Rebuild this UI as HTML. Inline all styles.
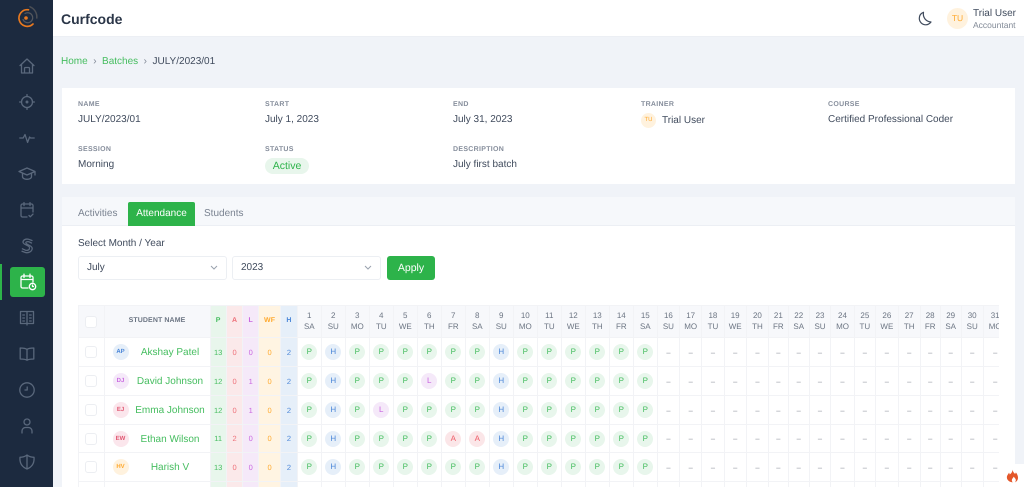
<!DOCTYPE html>
<html lang="en"><head><meta charset="utf-8"><title>Curfcode</title>
<style>
*{box-sizing:border-box}
html,body{margin:0;padding:0;width:1024px;height:487px;overflow:hidden;background:#f0f3f8;font-family:"Liberation Sans",sans-serif;color:#3f4a5c;text-rendering:geometricPrecision}
.a{position:absolute;white-space:nowrap}
#side{position:absolute;left:0;top:0;width:53px;height:487px;background:#1c2a3f}
#side svg{position:absolute;fill:none;stroke:#5a687c;stroke-width:1.3;stroke-linecap:round;stroke-linejoin:round}
.lab{font-size:7px;font-weight:bold;color:#858d9b;letter-spacing:.3px;line-height:10px}
.val{font-size:10px;color:#3f4a5c;line-height:14px}
.sel{position:absolute;top:256px;height:24px;width:149px;background:#fff;border:1px solid #eceff3;border-radius:3px;font-size:10px;line-height:22px;padding-left:8px}
.sel svg{position:absolute;right:8px;top:8px}
#tw{position:absolute;left:78px;top:305px;width:921px;height:182px;overflow:hidden}
table{border-collapse:collapse;table-layout:fixed;width:921.3px}
td,th{padding:0;border:1px solid #f2f3f6;text-align:center;font-size:7.500px;overflow:hidden;white-space:nowrap}
thead th{background:#f7f8fb;font-weight:normal;color:#6c7583;line-height:10.500px;height:32px;font-size:8px}
thead th.s{font-weight:bold;font-size:7px;letter-spacing:.1px}
tbody td{color:#777;position:relative}
tr.r1{height:29px}tr.r2{height:28px}
.cp{background:#e8f6ec;color:#45bd5f!important}.ca{background:#fbe9ea;color:#ee6f78!important}.cl{background:#f5e9f9;color:#c966e0!important}.cw{background:#fff4e2;color:#ffa92e!important}.ch{background:#e6eff9;color:#4a86d8!important}
.cb{display:inline-block;width:12px;height:12px;border:1px solid #eceef2;border-radius:3px;background:#fff;vertical-align:middle}
i{display:inline-block;width:16px;height:16px;border-radius:50%;font-style:normal;font-size:8px;line-height:16px;text-align:center;vertical-align:middle}
i.P{background:#e8f6ec;color:#45bd5f}i.H{background:#e6eff9;color:#4a86d8}i.L{background:#f5e9f9;color:#c966e0}i.A{background:#fbe6e8;color:#ee5a65}
.n{text-align:left}
.n u{text-decoration:none;position:absolute;left:8px;top:50%;margin-top:-8px;width:16px;height:16px;border-radius:50%;font-size:6px;font-weight:bold;line-height:16px;text-align:center}
.n span{display:block;position:relative;top:.5px;margin-left:26px;text-align:center;font-size:10px;color:#45bd5f}
.d{color:#8a8f98}
</style></head><body>

<div id="side">
<svg style="left:11px;top:3px" width="32" height="30" viewBox="0 0 32 30"><path d="M17.500 6.800A8.300 8.300 0 1 0 22 21" stroke="#e8791f" stroke-width="1.700"/><path d="M19 3.800A11 11 0 0 1 25.800 15" stroke="#4c4f55" stroke-width="1.500"/><path d="M14 10.500a5 5 0 1 1-2 6" stroke="#55585e" stroke-width="1.200"/><circle cx="15" cy="15" r="1.800" fill="#e8791f" stroke="none"/></svg>
<svg style="left:19px;top:58px" width="16" height="16" viewBox="0 0 16 16"><path d="M1 7.600 8 1l7 6.600M2.500 6.400V15h11V6.400M5.500 15v-4.500a1 1 0 0 1 1-1h3a1 1 0 0 1 1 1V15"/></svg>
<svg style="left:19px;top:94px" width="16" height="16" viewBox="0 0 16 16"><circle cx="8" cy="8" r="5.500"/><circle cx="8" cy="8" r=".8"/><path d="M8 .6v1.900M8 13.500v1.900M.6 8h1.900M13.500 8h1.900"/></svg>
<svg style="left:19px;top:130px" width="16" height="16" viewBox="0 0 16 16"><path d="M.8 8h3.400L6 4.600 8.600 12.400 10.600 7l.9 1h3.700"/></svg>
<svg style="left:18px;top:166px" width="18" height="16" viewBox="0 0 18 16"><path d="M1 5.500 9 2l8 3.500L9 9zM4.500 7.200v3.600c0 1.400 2 2.500 4.500 2.500s4.500-1.100 4.500-2.500V7.200M17 5.500V9"/></svg>
<svg style="left:19px;top:202px" width="16" height="16" viewBox="0 0 16 16"><path d="M8 15H3.500A1.500 1.500 0 0 1 2 13.500V3.500A1.500 1.500 0 0 1 3.500 2h9A1.500 1.500 0 0 1 14 3.500V10M5 .6v3M11 .6v3M2 6h12M10 13.500l1.300 1.300 2.700-2.700"/></svg>
<svg style="left:19px;top:238px" width="16" height="16" viewBox="0 0 16 16"><path d="M13 2.500 9.500 1.200C6.500.6 4.200 2 4 4c-.3 3 6.700 3 6.500 5.700M12.500 5 10 3.800C8 3.300 6.800 4 6.800 4.800c0 2 6.600 2.500 6.400 5.700-.2 3-3.300 4.600-6.400 4.100L3 13.300M3.400 10.800l3 1.400c2 .5 3.800-.2 4-1.600"/></svg>
<div class="a" style="left:0;top:264px;width:1.500px;height:36px;background:#2db34a"></div>
<div class="a" style="left:10px;top:267px;width:35px;height:30px;background:#2db34a;border-radius:3px"></div>
<svg style="left:19px;top:273px;stroke:#fff" width="18" height="18" viewBox="0 0 18 18"><path d="M9 15H3.500A1.500 1.500 0 0 1 2 13.500V4.500A1.500 1.500 0 0 1 3.500 3h9A1.500 1.500 0 0 1 14 4.500V9M5 1.200v3.300M11 1.200v3.300M2 6.500h12"/><circle cx="13.500" cy="13.500" r="3.200"/><path d="M13.500 12v1.500h1"/></svg>
<svg style="left:19px;top:310px" width="16" height="16" viewBox="0 0 16 16"><path d="M1.500 1.500h13v12h-13zM8 1.500v13.500M3.800 5h1.600M3.800 8h1.600M3.800 11h1.600M10.600 5h1.600M10.600 8h1.600M10.600 11h1.600"/></svg>
<svg style="left:19px;top:346px" width="16" height="16" viewBox="0 0 16 16"><path d="M8 3.500C6.500 2.200 4 2 1.200 2v11c2.800 0 5.300.2 6.800 1.200 1.500-1 4-1.200 6.800-1.200V2C12 2 9.500 2.200 8 3.500zM8 3.500v10.700"/></svg>
<svg style="left:19px;top:382px" width="16" height="16" viewBox="0 0 16 16"><circle cx="8" cy="8" r="7.200"/><path d="M8.200 5v3H6"/></svg>
<svg style="left:19px;top:418px" width="16" height="16" viewBox="0 0 16 16"><circle cx="8" cy="4" r="3"/><path d="M3 15v-2a3.500 3.500 0 0 1 3.500-3.500h3A3.500 3.500 0 0 1 13 13v2"/></svg>
<svg style="left:19px;top:454px" width="16" height="16" viewBox="0 0 16 16"><path d="M8 1c2 1.500 4.500 2.300 7 2.300C15.500 9 13 13 8 15 3 13 .5 9 1 3.300 3.500 3.300 6 2.500 8 1zM8 1v14"/></svg>
</div>

<div class="a" style="left:53px;top:0;width:971px;height:37px;background:#fff;border-bottom:1px solid #eceff4"></div>
<div class="a" style="left:61px;top:9px;font-size:14px;font-weight:bold;line-height:20px;color:#2b3648">Curfcode</div>
<svg class="a" style="left:918px;top:11px" width="14" height="15" viewBox="0 0 14 15" fill="none" stroke="#3f4a5c" stroke-width="1.200" stroke-linejoin="round"><path d="M5.500 1.300C4.600 6 7.500 10.500 13 11c-1.300 1.700-3 2.800-5.200 2.800A6.400 6.400 0 0 1 1.300 7.300c0-2.700 1.700-5 4.200-6z"/></svg>
<div class="a" style="left:947px;top:8px;width:21px;height:21px;border-radius:50%;background:#fff2de;color:#ffa92e;font-size:8.500px;line-height:21px;text-align:center">TU</div>
<div class="a" style="left:973px;top:7px;font-size:10px;line-height:13px;color:#3f4a5c">Trial User</div>
<div class="a" style="left:973px;top:19px;font-size:8.500px;line-height:12px;color:#828a97">Accountant</div>

<div class="a" style="left:61px;top:55px;font-size:10px;line-height:14px"><span style="color:#45bd5f">Home</span><span style="color:#828a97;padding:0 5.500px">›</span><span style="color:#45bd5f">Batches</span><span style="color:#828a97;padding:0 5.500px">›</span>JULY/2023/01</div>

<div class="a" style="left:62px;top:88px;width:953px;height:96px;background:#fff"></div>
<div class="a lab" style="left:78px;top:100px">NAME</div><div class="a val" style="left:78px;top:112.500px">JULY/2023/01</div>
<div class="a lab" style="left:265px;top:100px">START</div><div class="a val" style="left:265px;top:112.500px">July 1, 2023</div>
<div class="a lab" style="left:453px;top:100px">END</div><div class="a val" style="left:453px;top:112.500px">July 31, 2023</div>
<div class="a lab" style="left:641px;top:100px">TRAINER</div>
<div class="a" style="left:641px;top:113px;width:15px;height:15px;border-radius:50%;background:#fff2de;color:#ffa92e;font-size:6px;line-height:15px;text-align:center">TU</div>
<div class="a val" style="left:662px;top:114px">Trial User</div>
<div class="a lab" style="left:828px;top:100px">COURSE</div><div class="a val" style="left:828px;top:112.500px">Certified Professional Coder</div>
<div class="a lab" style="left:78px;top:145px">SESSION</div><div class="a val" style="left:78px;top:158px">Morning</div>
<div class="a lab" style="left:265px;top:145px">STATUS</div>
<div class="a" style="left:265px;top:158px;width:44px;height:16px;border-radius:8px;background:#e8f6ec;color:#2db34a;font-size:10.500px;line-height:16px;text-align:center">Active</div>
<div class="a lab" style="left:453px;top:145px">DESCRIPTION</div><div class="a val" style="left:453px;top:158px">July first batch</div>

<div class="a" style="left:62px;top:197px;width:953px;height:290px;background:#fff"></div>
<div class="a" style="left:62px;top:197px;width:953px;height:29px;background:#f6f8fb;border-bottom:1px solid #eceff4"></div>
<div class="a" style="left:78px;top:207px;font-size:10px;line-height:14px;color:#7a8391">Activities</div>
<div class="a" style="left:128px;top:202px;width:67px;height:24px;background:#2db34a;border-radius:2px 2px 0 0;color:#fff;font-size:10px;line-height:24px;text-align:center">Attendance</div>
<div class="a" style="left:204px;top:207px;font-size:10px;line-height:14px;color:#7a8391">Students</div>

<div class="a" style="left:78px;top:237px;font-size:10px;line-height:14px">Select Month / Year</div>
<div class="sel" style="left:78px">July<svg width="8" height="6" viewBox="0 0 8 6" fill="none" stroke="#9aa2ae"><path d="M1 1l3 3 3-3"/></svg></div>
<div class="sel" style="left:232px">2023<svg width="8" height="6" viewBox="0 0 8 6" fill="none" stroke="#9aa2ae"><path d="M1 1l3 3 3-3"/></svg></div>
<div class="a" style="left:387px;top:256px;width:48px;height:24px;background:#2db34a;border-radius:3px;color:#fff;font-size:10.500px;line-height:24px;text-align:center">Apply</div>

<div id="tw"><table>
<colgroup><col style="width:25.500px"><col style="width:106px"><col style="width:16.300px"><col style="width:16.500px"><col style="width:15.800px"><col style="width:22px"><col style="width:16.700px"><col span="15" style="width:24px"><col span="5" style="width:22.260px"><col style="width:19.700px"><col style="width:21px"><col style="width:21.600px"><col style="width:23.400px"><col style="width:21.300px"><col style="width:22.700px"><col style="width:22px"><col style="width:20px"><col style="width:21px"><col style="width:22px"><col style="width:24px"></colgroup>
<thead><tr><th><span class="cb"></span></th><th class="s">STUDENT NAME</th><th class="s cp">P</th><th class="s ca">A</th><th class="s cl">L</th><th class="s cw">WF</th><th class="s ch">H</th><th>1<br>SA</th><th>2<br>SU</th><th>3<br>MO</th><th>4<br>TU</th><th>5<br>WE</th><th>6<br>TH</th><th>7<br>FR</th><th>8<br>SA</th><th>9<br>SU</th><th>10<br>MO</th><th>11<br>TU</th><th>12<br>WE</th><th>13<br>TH</th><th>14<br>FR</th><th>15<br>SA</th><th>16<br>SU</th><th>17<br>MO</th><th>18<br>TU</th><th>19<br>WE</th><th>20<br>TH</th><th>21<br>FR</th><th>22<br>SA</th><th>23<br>SU</th><th>24<br>MO</th><th>25<br>TU</th><th>26<br>WE</th><th>27<br>TH</th><th>28<br>FR</th><th>29<br>SA</th><th>30<br>SU</th><th>31<br>MO</th></tr></thead>
<tbody>
<tr class="r1"><td><span class="cb"></span></td><td class="n"><u style="background:#e6eff9;color:#4a86d8">AP</u><span>Akshay Patel</span></td><td class="cp">13</td><td class="ca">0</td><td class="cl">0</td><td class="cw">0</td><td class="ch">2</td><td><i class="P">P</i></td><td><i class="H">H</i></td><td><i class="P">P</i></td><td><i class="P">P</i></td><td><i class="P">P</i></td><td><i class="P">P</i></td><td><i class="P">P</i></td><td><i class="P">P</i></td><td><i class="H">H</i></td><td><i class="P">P</i></td><td><i class="P">P</i></td><td><i class="P">P</i></td><td><i class="P">P</i></td><td><i class="P">P</i></td><td><i class="P">P</i></td><td class="d">–</td><td class="d">–</td><td class="d">–</td><td class="d">–</td><td class="d">–</td><td class="d">–</td><td class="d">–</td><td class="d">–</td><td class="d">–</td><td class="d">–</td><td class="d">–</td><td class="d">–</td><td class="d">–</td><td class="d">–</td><td class="d">–</td><td class="d">–</td></tr>
<tr class="r1"><td><span class="cb"></span></td><td class="n"><u style="background:#f5e9f9;color:#c966e0">DJ</u><span>David Johnson</span></td><td class="cp">12</td><td class="ca">0</td><td class="cl">1</td><td class="cw">0</td><td class="ch">2</td><td><i class="P">P</i></td><td><i class="H">H</i></td><td><i class="P">P</i></td><td><i class="P">P</i></td><td><i class="P">P</i></td><td><i class="L">L</i></td><td><i class="P">P</i></td><td><i class="P">P</i></td><td><i class="H">H</i></td><td><i class="P">P</i></td><td><i class="P">P</i></td><td><i class="P">P</i></td><td><i class="P">P</i></td><td><i class="P">P</i></td><td><i class="P">P</i></td><td class="d">–</td><td class="d">–</td><td class="d">–</td><td class="d">–</td><td class="d">–</td><td class="d">–</td><td class="d">–</td><td class="d">–</td><td class="d">–</td><td class="d">–</td><td class="d">–</td><td class="d">–</td><td class="d">–</td><td class="d">–</td><td class="d">–</td><td class="d">–</td></tr>
<tr class="r1"><td><span class="cb"></span></td><td class="n"><u style="background:#fbe6ec;color:#e0556f">EJ</u><span>Emma Johnson</span></td><td class="cp">12</td><td class="ca">0</td><td class="cl">1</td><td class="cw">0</td><td class="ch">2</td><td><i class="P">P</i></td><td><i class="H">H</i></td><td><i class="P">P</i></td><td><i class="L">L</i></td><td><i class="P">P</i></td><td><i class="P">P</i></td><td><i class="P">P</i></td><td><i class="P">P</i></td><td><i class="H">H</i></td><td><i class="P">P</i></td><td><i class="P">P</i></td><td><i class="P">P</i></td><td><i class="P">P</i></td><td><i class="P">P</i></td><td><i class="P">P</i></td><td class="d">–</td><td class="d">–</td><td class="d">–</td><td class="d">–</td><td class="d">–</td><td class="d">–</td><td class="d">–</td><td class="d">–</td><td class="d">–</td><td class="d">–</td><td class="d">–</td><td class="d">–</td><td class="d">–</td><td class="d">–</td><td class="d">–</td><td class="d">–</td></tr>
<tr class="r2"><td><span class="cb"></span></td><td class="n"><u style="background:#fbe6ec;color:#e0556f">EW</u><span>Ethan Wilson</span></td><td class="cp">11</td><td class="ca">2</td><td class="cl">0</td><td class="cw">0</td><td class="ch">2</td><td><i class="P">P</i></td><td><i class="H">H</i></td><td><i class="P">P</i></td><td><i class="P">P</i></td><td><i class="P">P</i></td><td><i class="P">P</i></td><td><i class="A">A</i></td><td><i class="A">A</i></td><td><i class="H">H</i></td><td><i class="P">P</i></td><td><i class="P">P</i></td><td><i class="P">P</i></td><td><i class="P">P</i></td><td><i class="P">P</i></td><td><i class="P">P</i></td><td class="d">–</td><td class="d">–</td><td class="d">–</td><td class="d">–</td><td class="d">–</td><td class="d">–</td><td class="d">–</td><td class="d">–</td><td class="d">–</td><td class="d">–</td><td class="d">–</td><td class="d">–</td><td class="d">–</td><td class="d">–</td><td class="d">–</td><td class="d">–</td></tr>
<tr class="r1"><td><span class="cb"></span></td><td class="n"><u style="background:#fff2de;color:#ffa92e">HV</u><span>Harish V</span></td><td class="cp">13</td><td class="ca">0</td><td class="cl">0</td><td class="cw">0</td><td class="ch">2</td><td><i class="P">P</i></td><td><i class="H">H</i></td><td><i class="P">P</i></td><td><i class="P">P</i></td><td><i class="P">P</i></td><td><i class="P">P</i></td><td><i class="P">P</i></td><td><i class="P">P</i></td><td><i class="H">H</i></td><td><i class="P">P</i></td><td><i class="P">P</i></td><td><i class="P">P</i></td><td><i class="P">P</i></td><td><i class="P">P</i></td><td><i class="P">P</i></td><td class="d">–</td><td class="d">–</td><td class="d">–</td><td class="d">–</td><td class="d">–</td><td class="d">–</td><td class="d">–</td><td class="d">–</td><td class="d">–</td><td class="d">–</td><td class="d">–</td><td class="d">–</td><td class="d">–</td><td class="d">–</td><td class="d">–</td><td class="d">–</td></tr>
<tr class="r1"><td></td><td></td><td class="cp"></td><td class="ca"></td><td class="cl"></td><td class="cw"></td><td class="ch"></td><td><i class="P"></i></td><td><i class="H"></i></td><td><i class="P"></i></td><td><i class="P"></i></td><td><i class="P"></i></td><td><i class="P"></i></td><td><i class="P"></i></td><td><i class="P"></i></td><td><i class="H"></i></td><td><i class="P"></i></td><td><i class="P"></i></td><td><i class="P"></i></td><td><i class="P"></i></td><td><i class="P"></i></td><td><i class="P"></i></td><td></td><td></td><td></td><td></td><td></td><td></td><td></td><td></td><td></td><td></td><td></td><td></td><td></td><td></td><td></td><td></td></tr>
</tbody></table></div>

<div class="a" style="left:1000px;top:464px;width:24px;height:23px;background:#fff"></div>
<svg class="a" style="left:1006px;top:469px" width="12" height="14" viewBox="0 0 14 15"><path d="M7.500 0c.6 2.500 1.500 3.500 3 5 .6-.5.8-1 1-1.800C13.300 5.500 14 7.500 14 9.500c0 2.600-1.600 4.500-3.600 5.500 1-1.200 1.300-2.500.8-3.800-.5-1.200-1.600-1.800-2-3-.9 1.500-2.400 2.500-2.400 4.300 0 1 .5 1.800 1 2.500-2-.2-6.800-1.500-6.800-6 0-2.500 1.700-3.500 2.500-5.500.5.800.7 1.400.8 2.200C5.800 4.800 7.600 3 7.500 0z" fill="#e4572a"/></svg>
</body></html>
